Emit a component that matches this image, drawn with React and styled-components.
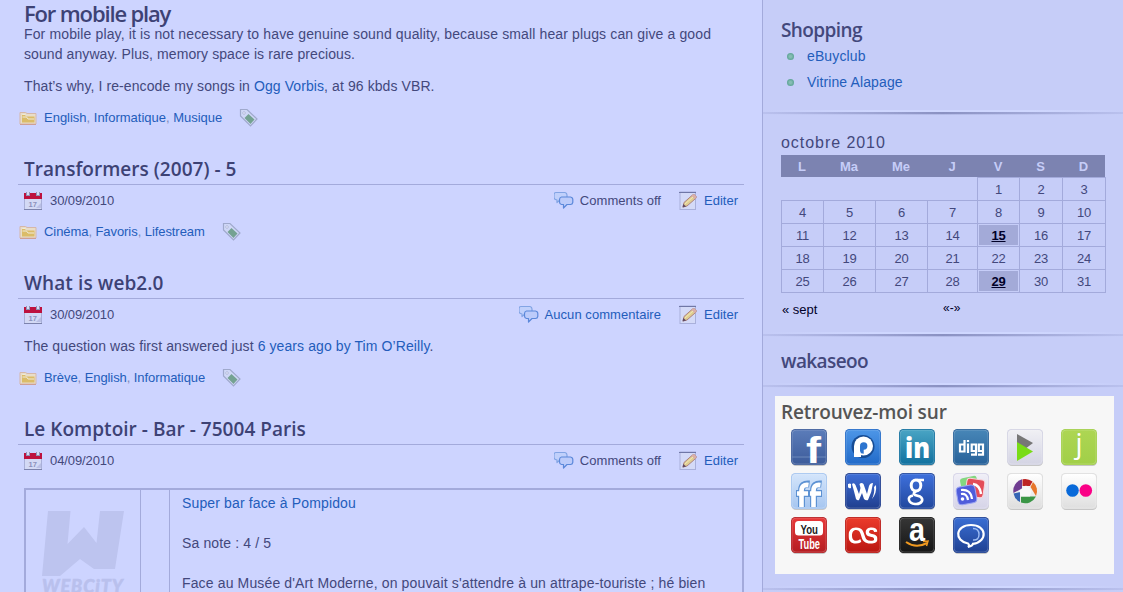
import React from "react";
import styled, { createGlobalStyle, css } from "styled-components";
import { FaLastfm } from "react-icons/fa";

const GlobalStyle = createGlobalStyle`
  * { box-sizing: border-box; }
  html, body { margin: 0; height: 592px; overflow: hidden; }
  body {
    background: #cdd4ff;
    color: #43487c;
    font: 14px/20px "Liberation Sans", Arial, sans-serif;
  }
  a { color: #235dbb; text-decoration: none; }
  svg { display: block; flex: none; }
`;

const Page = styled.div`
  display: flex;
  width: 1123px;
  height: 592px;
  overflow: hidden;
`;

const Main = styled.main`
  width: 762px;
  flex: none;
  padding: 4px 18px 0;
`;

const Sidebar = styled.aside`
  flex: 1;
  border-left: 1px solid #a3aadb;
  background: #c6cdf8;
`;

const headingFont = css`
  font-family: "Open Sans", "Trebuchet MS", sans-serif;
  font-weight: 600;
  white-space: nowrap;
`;

const LeadTitle = styled.h1`
  ${headingFont}
  margin: 0;
  padding-left: 6px;
  height: 20px;
  font-size: 22px;
  line-height: 19px;
  color: #3d4275;
  letter-spacing: -1.15px;
`;

const PostTitle = styled.h2`
  ${headingFont}
  margin: 0;
  padding-left: 6px;
  height: 30px;
  font-size: 19px;
  line-height: 28px;
  color: #3d4275;
  letter-spacing: ${(p) => p.$spacing}px;
  border-bottom: 1px solid #a3aadb;
  width: 726px;
`;

const Article = styled.article`
  margin-bottom: 23px;
`;

const InfoRow = styled.div`
  display: flex;
  align-items: center;
  height: 31px;
  padding: 0 6px;
  font-size: 13px;
`;

const DateText = styled.span`
  margin-left: 8px;
  flex: 1;
  letter-spacing: -0.1px;
`;

const InfoLabel = styled.span`
  margin: 0 ${(p) => (p.$last ? 0 : 18)}px 0 6px;
  letter-spacing: ${(p) => p.$spacing || 0}px;
`;

const Body = styled.div`
  padding: ${(p) => (p.$lead ? 0 : 6)}px 6px 6px;
  letter-spacing: 0.09px;
  p { margin: 0 0 12px; white-space: nowrap; }
  p:last-child { margin-bottom: 0; }
`;

const WideLine = styled.span`
  letter-spacing: 0.134px;
`;

const CategoryRow = styled.div`
  display: flex;
  align-items: center;
  height: 30px;
  padding: 1px 0 0 1px;
  font-size: 13px;
  color: #8088b5;
`;

const Categories = styled.span`
  margin: 0 17px 0 7px;
  padding-top: 1px;
  letter-spacing: ${(p) => p.$spacing}px;
`;

const Review = styled.div`
  display: grid;
  grid-template-columns: 114px 29px 1fr;
  margin: 12px 0 0 6px;
  width: 720px;
  height: 150px;
  border: 2px solid #a3aadb;
`;

const ReviewCell = styled.div`
  border-left: ${(p) => (p.$first ? 0 : 1)}px solid #a3aadb;
  padding: ${(p) => p.$pad || "0"};
  letter-spacing: 0.14px;
  white-space: nowrap;
  p { margin: 0 0 20px; }
`;

const Widget = styled.section`
  height: ${(p) => p.$height}px;
  padding: ${(p) => p.$top}px 0 0 18px;
`;

const Divider = styled.div`
  height: 6px;
  background:
    linear-gradient(90deg, transparent, #cfd7ff 30%, #cfd7ff 75%, transparent) 0 0 / 100% 2px no-repeat,
    linear-gradient(90deg, #bac1ee, #8a91c2 50%, #bac1ee) 0 2px / 100% 2px no-repeat,
    linear-gradient(90deg, transparent, #b3bae7 50%, transparent) 0 4px / 100% 1px no-repeat;
`;

const WidgetTitle = styled.h3`
  ${headingFont}
  margin: 0;
  height: 26px;
  font-size: 19px;
  line-height: 26px;
  letter-spacing: ${(p) => p.$spacing}px;
  color: ${(p) => p.$color || "#43487c"};
`;

const LinkList = styled.ul`
  list-style: none;
  margin: 0;
  padding: 0 0 0 6px;
  li {
    display: flex;
    align-items: center;
    gap: 13px;
    height: 26px;
    letter-spacing: 0.12px;
  }
`;

const Bullet = styled.i`
  width: 7px;
  height: 7px;
  border-radius: 50%;
  background: radial-gradient(circle, #86bdb4 20%, #559f8f 80%);
`;

const CalendarTitle = styled.div`
  height: 23px;
  font-size: 16px;
  line-height: 21px;
  letter-spacing: 0.95px;
`;

const CalendarGrid = styled.div`
  display: grid;
  grid-template-columns: 42px 52px 52px 50px 42px 43px 44px;
  grid-template-rows: 22px repeat(4, 23px) 24px;
  width: 325px;
  font-size: 13px;
  text-align: center;
  line-height: 24px;
`;

const DayName = styled.div`
  background: #7c83b1;
  color: #c6cdf8;
  font-weight: bold;
  margin-right: ${(p) => (p.$last ? 1 : 0)}px;
`;

const Day = styled.div`
  border: 0 solid #a3aadb;
  letter-spacing: -0.2px;
  ${(p) => !p.$empty && css`border-width: 1px ${p.$last ? 1 : 0}px ${p.$bottom ? 1 : 0}px 1px;`}
  ${(p) =>
    p.$active &&
    css`
      padding: 1px;
      font-weight: bold;
      color: #000028;
      text-decoration: underline;
      line-height: 22px;
      background: #a3aad8 content-box;
    `}
`;

const CalendarNav = styled.div`
  display: flex;
  padding: 7px 1px 0;
  font-size: 13px;
  color: #000028;
  span:first-child { width: 161px; }
  span:last-child { font-size: 12px; line-height: 16px; }
`;

const SocialBox = styled.section`
  width: 339px;
  height: 178px;
  margin: 7px 0 12px 12px;
  padding: 3px 6px 0;
  background: #f7f7f7;
`;

const SocialGrid = styled.div`
  display: grid;
  grid-template-columns: repeat(6, 54px);
  grid-auto-rows: 44px;
  padding: 4px 0 0 10px;
`;

const CalendarIcon = () => (
  <svg width="18" height="18" viewBox="0 0 18 18">
    <rect x="0.5" y="2" width="17" height="15.5" fill="#d3d9f5" stroke="#a9b0d8" />
    <rect x="0" y="1" width="18" height="6" fill="#bd123f" />
    <path d="M4 0v4M14 0v4" stroke="#9094b8" strokeWidth="4" />
    <path d="M4 0v3M14 0v3" stroke="#d6daf5" strokeWidth="2" />
    <path d="M0 17.500h18" stroke="#7c83ad" />
    <text x="4.500" y="14.500" fontSize="7.500" fontWeight="bold" fill="#8b91bb" fontFamily="Liberation Sans">17</text>
    <path d="M12 16l5-5v5z" fill="#b9bfe6" />
  </svg>
);

const FolderIcon = () => (
  <svg width="18" height="18" viewBox="0 0 18 18">
    <path d="M1 15V3.500h5.500L8 4.500h9V15z" fill="#e8ddc9" stroke="#d6b7a9" />
    <path d="M3 6h3l1 1.500h8.500v6H3z" fill="#dbbc68" />
    <path d="M3.500 8h4L9 10h6M3.500 5.500h3" stroke="#f0ead9" fill="none" />
    <path d="M1 15.500h16" stroke="#cf9f94" />
  </svg>
);

const TagIcon = () => (
  <svg width="20" height="20" viewBox="0 0 20 20">
    <path d="M1.500 1.500h6.500l10 9.500-6.500 7L1.500 8z" fill="#cfd7f7" stroke="#9fa9cc" strokeWidth="1.200" />
    <circle cx="5" cy="5" r="1.300" fill="#edf0ff" stroke="#aab3d4" strokeWidth=".8" />
    <path d="M9.500 6l6 5.500-4 4.500-6-6z" fill="#74a292" />
  </svg>
);

const CommentsIcon = () => (
  <svg width="20" height="20" viewBox="0 0 20 20" strokeWidth="1.200" strokeLinejoin="round">
    <path d="M2 1.500h9q2 .5 2 2.500v3q-.5 2-2 2H6l-3 2.500V9Q0 8.500 0 6.500v-3q.3-2 2-2z" fill="#c0d0fb" stroke="#82a4e4" />
    <path d="M7.500 6h9q2.300.4 2.300 2.500v2.800q-.3 2-2.300 2.200H13L9.500 17v-3.500h-2q-2-.4-2-2.400V8.500Q5.700 6.300 7.500 6z" fill="#bccbfa" stroke="#5b88da" />
  </svg>
);

const EditIcon = () => (
  <svg width="19" height="20" viewBox="0 0 19 20">
    <rect x="1" y="1" width="15.500" height="17.500" fill="#d4daf8" stroke="#a9b0db" />
    <path d="M0 1.500h17" stroke="#7077a6" />
    <path d="M4 16l1-4.500L13.500 4q1.500-1 3 .5t.3 2.800L8 15z" fill="#dfce91" stroke="#ad8181" />
    <path d="M12.500 5l3.300 3.200 1.300-1.400q.5-1.500-1-2.700t-2.300-.5z" fill="#d9afaa" />
    <path d="M3.500 16.500l.8-3.500 2.800 2.500z" fill="#604b62" />
    <path d="M6 13l8-7" stroke="#f2e8b8" />
  </svg>
);

const WebCityLogo = () => (
  <svg width="114" height="120" viewBox="0 0 114 120">
    <path d="M22 21H44.500L41.500 54 58 37l12.500 16L74 21h24l-9 58H68L54 69 34 86H16z" fill="#bdc4ef" />
    <text x="16" y="103" fontSize="18" fontWeight="900" fontStyle="italic" textLength="81" fill="#b9c0ed" stroke="#b9c0ed" strokeWidth="0.5" fontFamily="Lato, sans-serif">WEBCiTY</text>
  </svg>
);

const tiles = {
  facebook: ["#5b7cb9", "#3d5c9b"],
  ping: ["#4d96e7", "#226bc9"],
  linkedin: ["#49a4c4", "#12719f"],
  digg: ["#4786b7", "#28629a"],
  blip: ["#f0f0f4", "#d4d4e4"],
  jamespot: ["#add653", "#a1cf48"],
  friendfeed: ["#d4e5fb", "#a6c6f0"],
  wikio: ["#3e6ed7", "#203f8f"],
  google: ["#3e70dc", "#22489e"],
  reader: ["#f0eff7", "#d6d4e8"],
  picasa: ["#ffffff", "#dedede"],
  flickr: ["#ffffff", "#dfdfdf"],
  youtube: ["#e8393a", "#b51d22"],
  lastfm: ["#eb3b2b", "#bb1712"],
  amazon: ["#363636", "#161616"],
  chat: ["#3a6ed3", "#1f4193"],
};

const sans = "Liberation Sans, Arial, sans-serif";

const glyphs = {
  facebook: (
    <>
      <path d="M1 28h34" stroke="#6d89bb" />
      <text x="15" y="34" fontSize="36" fontWeight="bold" fill="#fff" fontFamily={sans} textLength="15" lengthAdjust="spacingAndGlyphs">f</text>
    </>
  ),
  ping: (
    <>
      <circle cx="18" cy="17.500" r="11.500" fill="#174d95" />
      <circle cx="18.500" cy="17" r="9.500" fill="#fff" />
      <path d="M9 17v11h7V17z" fill="#fff" />
      <path d="M15 22v-5a3.700 3.700 0 1 1 3.700 3.700v4l-2.700-.5z" fill="#2c74cf" />
    </>
  ),
  linkedin: <text x="6" y="29" fontSize="29" fontWeight="800" fill="#fff" fontFamily="Open Sans, sans-serif" textLength="25" lengthAdjust="spacingAndGlyphs">in</text>,
  digg: (
    <g fill="none" stroke="#fff" strokeWidth="2.200">
      <path d="M11.500 11v11.500H7v-7h4.500M15 14.500V24M15 11v2M23 15.500h-4.300v6.500H23M23 14.400v11.200h-5M30 15.500h-4.200v6.500H30M30 14.400v11.200h-5" />
    </g>
  ),
  blip: (
    <>
      <path d="M10 5l16 9-8 6-8-5z" fill="#777" />
      <path d="M10 13l16 9.500L10 32z" fill="#79dc17" />
    </>
  ),
  jamespot: <text x="14.500" y="24" fontSize="28" fill="#fff" fontFamily="Open Sans, sans-serif">j</text>,
  friendfeed: (
    <g fill="none">
      <path d="M10.500 34V18q0-8 8-7M5 20.500h13M22.500 34V18q0-8 8-7M18 20.500h13" stroke="#5d92d3" strokeWidth="7" />
      <path d="M10.500 34V18q0-7 7-6M6 20.500h11M22.500 34V18q0-7 7-6M19 20.500h11" stroke="#fff" strokeWidth="4.600" />
    </g>
  ),
  wikio: <path d="M3 11q2-1 3 0v4q-2 1-3-1zM7 11q2-2 3.500 1l3.500 9 1.500-6-1-4q2-2 4 0l3.500 10 2-8q1-3 4-3-1 9-5 17-2 1-4-1l-2-6-3 7q-1.500 1-3-1-2-8-4-15zM31 12q1 8-4 14 3-7 2-12z" fill="#fff" />,
  google: (
    <g fill="none" stroke="#fff">
      <ellipse cx="17" cy="12.500" rx="4.800" ry="5.500" strokeWidth="3" />
      <path d="M18 7h7M17 18.500q-4 2-1 3.500l5 1.500q3 2 2 4.500-2 3.500-7 3t-6-4 4-4.500" strokeWidth="2.600" />
    </g>
  ),
  reader: (
    <>
      <rect x="8" y="4" width="17" height="16" rx="3" fill="#83d780" transform="rotate(-12 16 12)" />
      <rect x="13" y="6" width="18" height="18" rx="3" fill="#e34d5a" stroke="#f9d5da" transform="rotate(8 22 15)" />
      <path d="M20 11q7 1 8 10" fill="none" stroke="#fff" strokeWidth="2.500" />
      <rect x="4" y="13" width="19" height="18" rx="4" fill="#4f5cdb" stroke="#9ca5f1" transform="rotate(-10 13 22)" />
      <g fill="none" stroke="#fff" strokeWidth="2.200"><path d="M8 21q6-1 7 6M8 17q10-1 11 9" /></g>
      <circle cx="9.500" cy="26" r="1.800" fill="#fff" />
    </>
  ),
  picasa: (
    <>
      <path d="M15 15.500L6.500 20A12 12 0 0 1 15 6.300z" fill="#6f3c91" />
      <path d="M23 13L15.500 13V6.200A12 12 0 0 1 25.500 8.500z" fill="#bd2423" />
      <path d="M23.500 14l2.500-5a12 12 0 0 1 3 14z" fill="#e7772b" />
      <path d="M14 23.500h15a12 12 0 0 1-15 6z" fill="#3a9645" />
      <path d="M13 19v10A12 12 0 0 1 6.500 20.500z" fill="#3665b4" />
      <path d="M12.500 17.500l6.500-5 5.500 5-1.500 6h-9.500z" fill="#f8f8f8" />
    </>
  ),
  flickr: (
    <>
      <circle cx="11.500" cy="17.500" r="6.300" fill="#0869d9" />
      <circle cx="24.800" cy="17.500" r="6.300" fill="#fa0086" />
    </>
  ),
  youtube: (
    <>
      <rect x="4" y="4" width="28" height="14.500" rx="3.500" fill="#fff" />
      <text x="9.500" y="16.500" fontSize="13.500" fontWeight="bold" fill="#202020" fontFamily={sans} textLength="17.500" lengthAdjust="spacingAndGlyphs">You</text>
      <text x="7.500" y="32" fontSize="14" fontWeight="bold" fill="#fff" fontFamily={sans} textLength="21.500" lengthAdjust="spacingAndGlyphs">Tube</text>
    </>
  ),
  lastfm: <g transform="translate(3.500 4)" color="#fff" stroke="#fff" strokeWidth="8"><FaLastfm size={29} /></g>,
  amazon: (
    <>
      <text x="10" y="24" fontSize="34" fontWeight="bold" fill="#fff" fontFamily={sans} textLength="16" lengthAdjust="spacingAndGlyphs">a</text>
      <path d="M7 25q10 7 21 1" fill="none" stroke="#f19a20" strokeWidth="2" />
      <path d="M24 24.500l5-.5-1.500 5" fill="none" stroke="#f19a20" strokeWidth="1.500" />
    </>
  ),
  chat: (
    <>
      <path d="M15 26.500C1 24 2 8 18 8s17 16.500 2 18.800q-.5 2.200-5 3.200 2-1.500 0-3.500z" fill="none" stroke="#fff" strokeWidth="2.200" />
      <path d="M20 11.500q6 0 6 6t-6 5.500" fill="none" stroke="#9dbcf3" strokeWidth="1.400" />
    </>
  ),
};

const SocialTile = ({ name }) => {
  const [top, bottom] = tiles[name];
  return (
    <svg width="37" height="38" viewBox="0 0 37 38">
      <defs>
        <linearGradient id={`tile-${name}`} x1="0" y1="0" x2="0" y2="1">
          <stop offset="0" stopColor={top} />
          <stop offset="1" stopColor={bottom} />
        </linearGradient>
      </defs>
      <rect x="0.500" y="1" width="35.500" height="36" rx="4.500" fill="#c6c6c6" />
      <rect x="0" y="0" width="36" height="36" rx="4.500" fill={bottom} />
      <rect x="1" y="1" width="34" height="34" rx="4" fill={`url(#tile-${name})`} stroke="#fff" strokeOpacity="0.2" />
      {glyphs[name]}
    </svg>
  );
};

const PostInfo = ({ date, comments, closed }) => (
  <InfoRow>
    <CalendarIcon />
    <DateText>{date}</DateText>
    <CommentsIcon />
    <InfoLabel $spacing={closed ? 0.04 : 0.05}>{closed ? comments : <a>{comments}</a>}</InfoLabel>
    <EditIcon />
    <InfoLabel $last><a>Editer</a></InfoLabel>
  </InfoRow>
);

const PostCategories = ({ names, spacing }) => (
  <CategoryRow>
    <FolderIcon />
    <Categories $spacing={spacing}>
      {names.map((name, i) => (
        <React.Fragment key={name}>
          {i > 0 && ", "}
          <a>{name}</a>
        </React.Fragment>
      ))}
    </Categories>
    <TagIcon />
  </CategoryRow>
);

const dayNames = ["L", "Ma", "Me", "J", "V", "S", "D"];
const days = [null, null, null, null, ...Array.from({ length: 31 }, (_, i) => i + 1)];

export default function App() {
  return (
    <Page>
      <GlobalStyle />
      <Main>
        <Article>
          <LeadTitle>For mobile play</LeadTitle>
          <Body $lead>
            <p>
              <WideLine>
                For mobile play, it is not necessary to have genuine sound quality, because small hear plugs can give a good
              </WideLine>
              <br />
              sound anyway. Plus, memory space is rare precious.
            </p>
            <p>That’s why, I re-encode my songs in <a>Ogg Vorbis</a>, at 96 kbds VBR.</p>
          </Body>
          <PostCategories spacing={-0.01} names={["English", "Informatique", "Musique"]} />
        </Article>
        <Article>
          <PostTitle $spacing={0.03}>Transformers (2007) - 5</PostTitle>
          <PostInfo date="30/09/2010" comments="Comments off" closed />
          <PostCategories spacing={-0.07} names={["Cinéma", "Favoris", "Lifestream"]} />
        </Article>
        <Article>
          <PostTitle $spacing={0.1}>What is web2.0</PostTitle>
          <PostInfo date="30/09/2010" comments="Aucun commentaire" />
          <Body>
            <p>The question was first answered just <a>6 years ago by Tim O’Reilly</a>.</p>
          </Body>
          <PostCategories spacing={-0.08} names={["Brève", "English", "Informatique"]} />
        </Article>
        <Article>
          <PostTitle $spacing={0.03}>Le Komptoir - Bar - 75004 Paris</PostTitle>
          <PostInfo date="04/09/2010" comments="Comments off" closed />
          <Review>
            <ReviewCell $first><WebCityLogo /></ReviewCell>
            <ReviewCell />
            <ReviewCell $pad="3px 12px">
              <p><a>Super bar face à Pompidou</a></p>
              <p>Sa note : 4 / 5</p>
              <p>Face au Musée d'Art Moderne, on pouvait s'attendre à un attrape-touriste ; hé bien</p>
            </ReviewCell>
          </Review>
        </Article>
      </Main>
      <Sidebar>
        <Widget $height={110} $top={17}>
          <WidgetTitle $spacing={-0.6}>Shopping</WidgetTitle>
          <LinkList>
            <li><Bullet /><a>eBuyclub</a></li>
            <li><Bullet /><a>Vitrine Alapage</a></li>
          </LinkList>
        </Widget>
        <Divider />
        <Widget $height={216} $top={16}>
          <CalendarTitle>octobre 2010</CalendarTitle>
          <CalendarGrid>
            {dayNames.map((name, i) => (
              <DayName key={name} $last={i === 6}>{name}</DayName>
            ))}
            {days.map((day, i) => (
              <Day key={i} $empty={!day} $last={i % 7 === 6} $bottom={i >= 28} $active={day === 15 || day === 29}>
                {day}
              </Day>
            ))}
          </CalendarGrid>
          <CalendarNav>
            <span>« sept</span>
            <span>«-»</span>
          </CalendarNav>
        </Widget>
        <Divider />
        <Widget $height={45} $top={10}>
          <WidgetTitle $spacing={-0.6}>wakaseoo</WidgetTitle>
        </Widget>
        <Divider />
        <SocialBox>
          <WidgetTitle $spacing={-0.15} $color="#555555">Retrouvez-moi sur</WidgetTitle>
          <SocialGrid>
            {Object.keys(tiles).map((name) => (
              <SocialTile key={name} name={name} />
            ))}
          </SocialGrid>
        </SocialBox>
        <Divider />
      </Sidebar>
    </Page>
  );
}
